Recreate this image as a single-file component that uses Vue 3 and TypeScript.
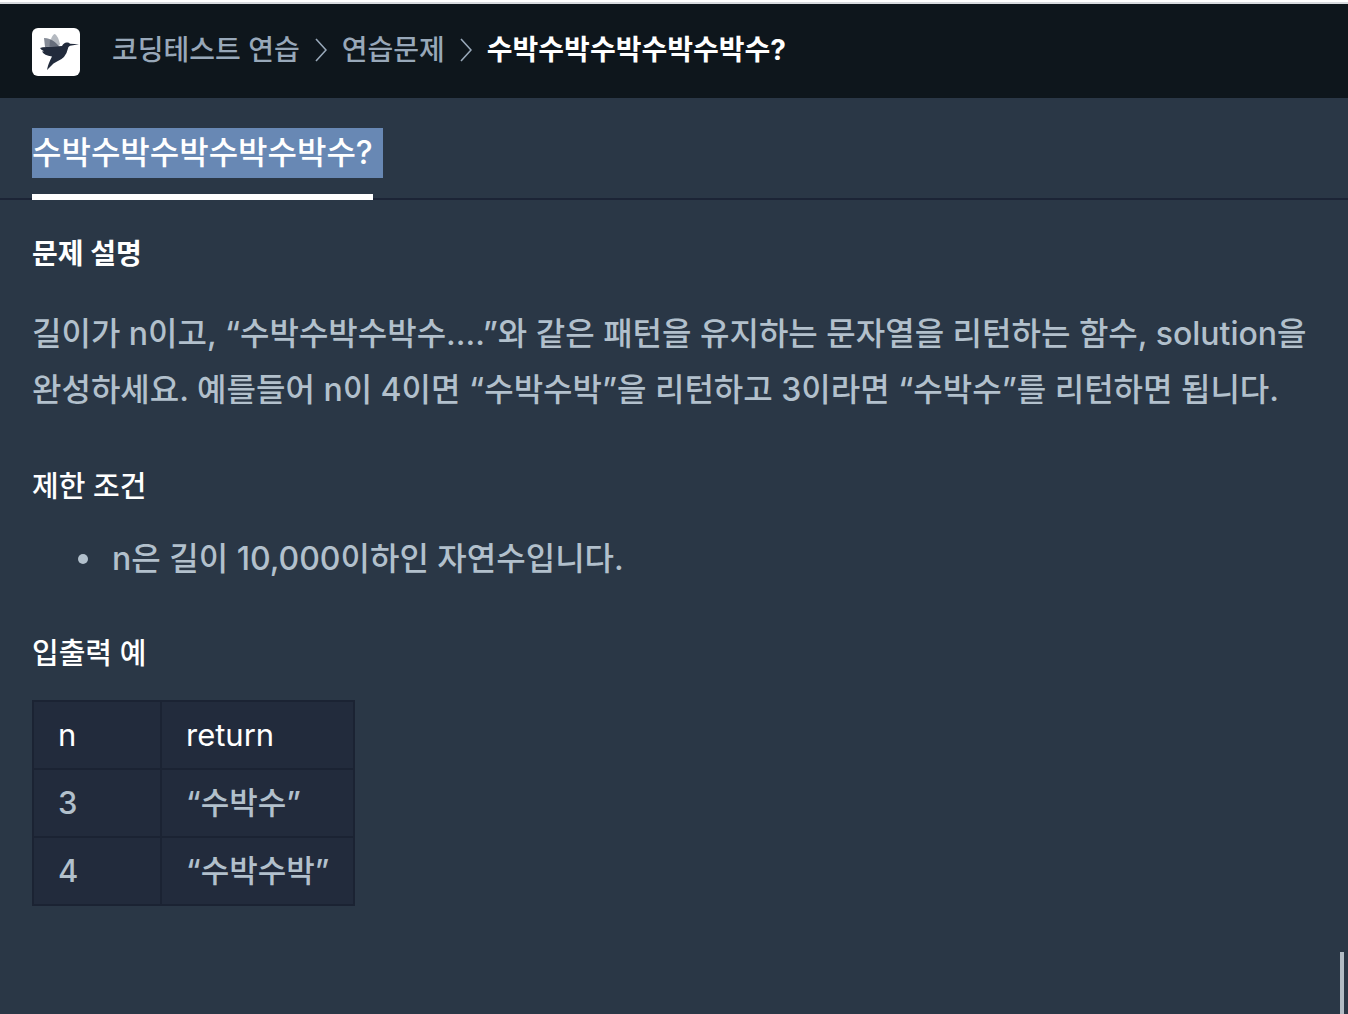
<script setup lang="ts">
interface Example {
  n: number
  result: string
}

const title = '수박수박수박수박수박수?'
const parents: string[] = ['코딩테스트 연습', '연습문제']
const examples: Example[] = [
  { n: 3, result: '“수박수”' },
  { n: 4, result: '“수박수박”' },
]
</script>

<template>
  <div class="page">
    <header class="topbar">
      <a class="logo" href="#" aria-label="홈">
        <svg viewBox="0 0 48 48" width="48" height="48" aria-hidden="true">
          <path d="M18 17 L19 11 Q21 6 23 6 Q26 8 28 16 L27 18Z" fill="#b4b9c0" />
          <path d="M13 19 L12 10 Q18 10 22 14 Q26 17 27 18.500Z" fill="#858b96" />
          <path d="M17.500 18.500 L18 11.500 Q23 13 27 18.500Z" fill="#666d7b" />
          <path
            d="M8 20 Q10 19 15 19 L30 18 Q32 14 35.500 14.500 Q37 14.600 38 15.700 L47 16.300 L38 17.700 Q36 18.500 35.800 21 Q34 30 25 33.500 Q21 35 19 38 L15 42 Q16 36 20 28.500 Q12 27.500 10 23.500 L12 23.300 Q9 22 8 20Z"
            fill="#222b3c"
          />
        </svg>
      </a>
      <nav aria-label="현재 위치">
        <ol class="crumbs">
          <li v-for="name in parents" :key="name" class="crumb">
            <a href="#">{{ name }}</a>
            <svg class="chevron" viewBox="0 0 12 24" width="12" height="24" aria-hidden="true">
              <path d="M1 1 L11 12 L1 23" fill="none" stroke="currentColor" stroke-width="1.600" />
            </svg>
          </li>
          <li class="crumb current" aria-current="page">{{ title }}</li>
        </ol>
      </nav>
    </header>

    <div class="tabs">
      <h1 class="tab"><span class="selected">{{ title }}</span></h1>
    </div>

    <main class="guide">
      <h2 class="caption">문제 설명</h2>
      <p class="text">
        길이가 n이고, “수박수박수박수....”와 같은 패턴을 유지하는 문자열을 리턴하는 함수, solution을 완성하세요. 예를들어 n이 4이면 “수박수박”을 리턴하고 3이라면 “수박수”를 리턴하면 됩니다.
      </p>

      <h3 class="subhead">제한 조건</h3>
      <ul class="rules">
        <li>n은 길이 10,000이하인 자연수입니다.</li>
      </ul>

      <h3 class="subhead">입출력 예</h3>
      <table class="examples">
        <thead>
          <tr>
            <th scope="col">n</th>
            <th scope="col">return</th>
          </tr>
        </thead>
        <tbody>
          <tr v-for="row in examples" :key="row.n">
            <td>{{ row.n }}</td>
            <td>{{ row.result }}</td>
          </tr>
        </tbody>
      </table>
    </main>

    <div class="scroll-thumb" aria-hidden="true"></div>
  </div>
</template>

<style>
body {
  background: #2a3746;
}
</style>

<style scoped>
.page {
  position: relative;
  box-sizing: border-box;
  min-height: 100vh;
  border-top: 2px solid #fff;
  background: #2a3746;
  color: #b2c0cc;
  font-family: Inter, "Noto Sans CJK KR", sans-serif;
  font-size: 32px;
  font-weight: 500;
  line-height: 56px;
  word-break: keep-all;
}

.topbar {
  display: flex;
  align-items: center;
  gap: 32px;
  padding: 24px 32px 22px;
  border-top: 2px solid #d7dade;
  background: #0e161c;
}

.logo {
  flex: none;
  overflow: hidden;
  height: 48px;
  border-radius: 6px;
  background: #fff;
}

.logo svg {
  display: block;
}

.crumbs {
  display: flex;
  gap: 15px;
  margin: 0;
  padding: 0 0 4px;
  list-style: none;
  color: #98a8b9;
  font-size: 28px;
  line-height: 40px;
}

.crumb {
  display: flex;
  align-items: center;
  gap: 15px;
  white-space: nowrap;
}

.crumb a {
  color: inherit;
  text-decoration: none;
}

.current {
  color: #fff;
  font-weight: 700;
}

.tabs {
  display: flex;
  padding: 30px 32px 0;
  border-bottom: 2px solid #1c2436;
}

.tab {
  margin: 0 0 -2px;
  padding-bottom: 16px;
  border-bottom: 6px solid #fff;
  color: #fff;
  font-size: 32px;
  font-weight: 500;
  line-height: 50px;
}

.selected {
  display: block;
  margin-right: -10px;
  padding-right: 10px;
  background: #6888b4;
}

.guide {
  padding: 34px 32px 106px;
}

.caption {
  margin: 0 0 32px;
  color: #fff;
  font-size: 28px;
  font-weight: 700;
  line-height: 40px;
}

.text {
  margin: 0;
}

.subhead {
  margin: 48px 0 25px;
  color: #fff;
  font-size: 29px;
  font-weight: 500;
  line-height: 42px;
}

.rules {
  margin: 0;
  padding-left: 46px;
  line-height: 52px;
  list-style: none;
}

.rules li {
  display: flex;
  align-items: center;
  gap: 24px;
}

.rules li::before {
  content: "";
  flex: none;
  width: 10px;
  height: 10px;
  border-radius: 50%;
  background: currentColor;
}

.examples {
  min-width: 322px;
  border-collapse: collapse;
  background: #222b3c;
  font-size: 31px;
}

.examples th,
.examples td {
  padding: 9px 24px;
  border: 2px solid #1b2333;
  line-height: 48px;
  text-align: left;
}

.examples th {
  color: #fff;
  font-weight: 400;
}

.examples th:first-child {
  width: 78px;
}

.scroll-thumb {
  position: absolute;
  right: 4px;
  bottom: 0;
  width: 4px;
  height: 62px;
  background: #b2bcc5;
}
</style>
